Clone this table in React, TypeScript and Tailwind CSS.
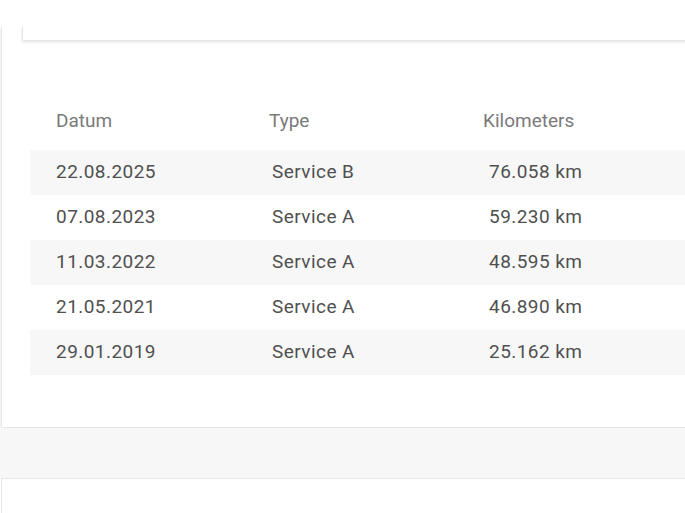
const rows = [
  { date: "22.08.2025", type: "Service B", km: "76.058 km" },
  { date: "07.08.2023", type: "Service A", km: "59.230 km" },
  { date: "11.03.2022", type: "Service A", km: "48.595 km" },
  { date: "21.05.2021", type: "Service A", km: "46.890 km" },
  { date: "29.01.2019", type: "Service A", km: "25.162 km" },
];

export default function App() {
  return (
    <div className="h-[513px] w-[685px] overflow-hidden bg-white font-['Roboto',sans-serif]">
      <div className="h-[27px]" />
      {/* outer card */}
      <div className="ml-[1px] w-[720px] border-l border-[#e6e6e6] bg-white shadow-[0_2px_3px_rgba(0,0,0,0.12)]">
        <div className="ml-[20px] h-[13px] border-l border-[#e6e6e6] bg-white shadow-[0_2px_3px_rgba(0,0,0,0.12)]" />
        <div className="pl-[28px] pt-[65px] pb-[52px]">
          <div className="flex h-[45px] items-start pt-[4px] text-[19px] leading-6 text-[#7a7a7a]">
            <div className="w-[213px] pl-[26px]">Datum</div>
            <div className="w-[214px] pl-[26px]">Type</div>
            <div className="pl-[26px]">Kilometers</div>
          </div>
          {rows.map((r, i) => (
            <div
              key={r.date}
              className={
                "flex h-[45px] items-center text-[19px] tracking-[0.45px] text-[#505050] " +
                (i % 2 === 0 ? "bg-[#f7f7f7]" : "bg-white")
              }
            >
              <div className="w-[213px] pl-[26px]">{r.date}</div>
              <div className="w-[214px] pl-[29px]">{r.type}</div>
              <div className="pl-[32px]">{r.km}</div>
            </div>
          ))}
        </div>
      </div>
      <div className="mt-[1px] h-[50px] bg-[#f7f7f7]" />
      <div className="ml-[1px] h-[40px] border-l border-t border-[#e6e6e6] bg-white" />
    </div>
  );
}
